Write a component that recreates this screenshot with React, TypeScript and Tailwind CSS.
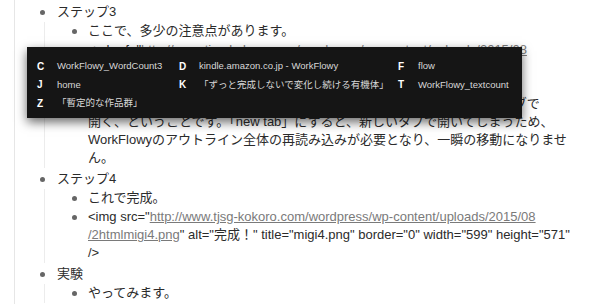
import React from "react";

const Dot = ({ w }: { w: string }) => (
  <span className={`${w} h-[18px] shrink-0 flex items-center`}>
    <span className="block w-[5px] h-[5px] rounded-full bg-[#666]" />
  </span>
);

const L1 = ({ label, children }: { label: React.ReactNode; children?: React.ReactNode }) => (
  <li className="pl-[25px] pb-[2px]">
    <div className="flex pb-[1px]">
      <Dot w="w-[17px]" />
      <div className="leading-[18px] whitespace-nowrap">{label}</div>
    </div>
    <ul className="ml-[4px] border-l border-[#ececec]">{children}</ul>
  </li>
);

const L2 = ({ children }: { children: React.ReactNode }) => (
  <li className="pl-[27px] flex pb-[1px]">
    <Dot w="w-[16px]" />
    <div className="leading-[18px] whitespace-nowrap">{children}</div>
  </li>
);

const Link = ({ children }: { children: React.ReactNode }) => (
  <span className="text-[#7a7a7a] underline">{children}</span>
);

const Key = ({ k, t }: { k: string; t: string }) => (
  <div className="flex items-center whitespace-nowrap">
    <span className="w-[20px] font-bold text-white text-[10px]">{k}</span>
    <span className="text-[#d8d8d8]">{t}</span>
  </div>
);

export default function App() {
  return (
    <div className="relative w-[599px] h-[304px] overflow-hidden bg-white text-[13px] text-[#2b2b2b] font-['Liberation_Sans','Noto_Sans_CJK_JP',sans-serif]">
      <div className="ml-[14px] h-[304px] border-l border-[#e6e6e6] pt-[3px]">
        <ul>
          <L1 label="ステップ3">
            <L2>ここで、多少の注意点があります。</L2>
            <L2>
              &lt;a href="<Link>http://www.tjsg-kokoro.com/wordpress/wp-content/uploads/2015/08</Link>
              <br />
              <Link>/2htmlmigi3.png</Link>"&gt;とし、target="_blank"は付けません。
              <br />
              WorkFlowy内のリンクは、同じタブで開くのが基本です。
              <br />
              「target="_blank"」を付けると、リンクをクリックした時には、新しいタブで
              <br />
              開く、ということです。「new tab」にすると、新しいタブで開いてしまうため、
              <br />
              WorkFlowyのアウトライン全体の再読み込みが必要となり、一瞬の移動になりませ
              <br />
              ん。
            </L2>
          </L1>
          <L1 label="ステップ4">
            <L2>これで完成。</L2>
            <L2>
              &lt;img src="<Link>http://www.tjsg-kokoro.com/wordpress/wp-content/uploads/2015/08</Link>
              <br />
              <Link>/2htmlmigi4.png</Link>" alt="完成！" title="migi4.png" border="0" width="599" height="571"
              <br />
              /&gt;
            </L2>
          </L1>
          <L1 label="実験">
            <L2>やってみます。</L2>
          </L1>
        </ul>
      </div>

      <div className="absolute left-[27px] top-[47px] w-[495px] h-[71px] bg-[#151515] shadow-[0_4px_10px_rgba(0,0,0,0.6)] pl-[10px] pt-[10px] text-[9.5px]">
        <div className="grid grid-cols-[142px_219px_auto] auto-rows-[18.5px]">
          <Key k="C" t="WorkFlowy_WordCount3" />
          <Key k="D" t="kindle.amazon.co.jp - WorkFlowy" />
          <Key k="F" t="flow" />
          <Key k="J" t="home" />
          <Key k="K" t="「ずっと完成しないで変化し続ける有機体」" />
          <Key k="T" t="WorkFlowy_textcount" />
          <Key k="Z" t="「暫定的な作品群」" />
        </div>
      </div>
    </div>
  );
}
